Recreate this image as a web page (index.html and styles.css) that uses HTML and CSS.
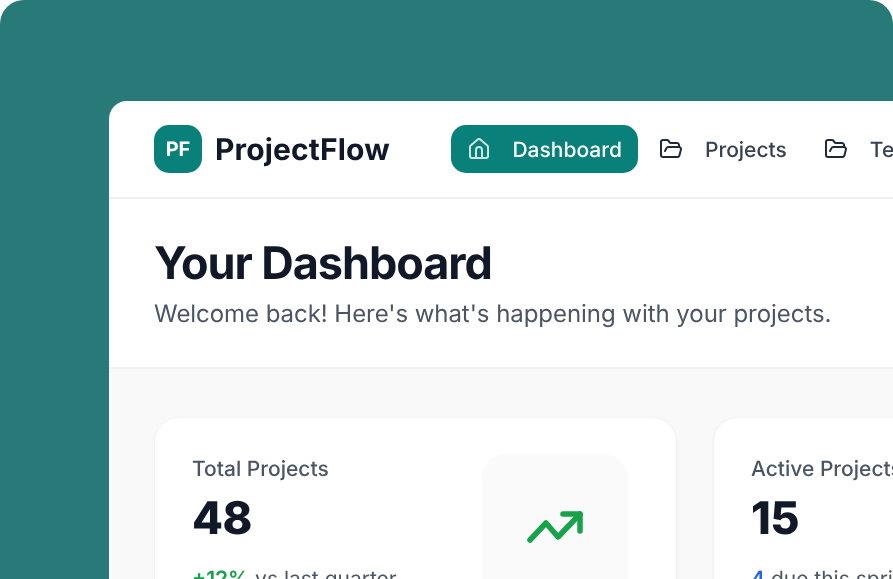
FILE: index.html
```html
<!DOCTYPE html>
<html lang="en">
<head>
<meta charset="utf-8">
<title>ProjectFlow</title>
<link rel="stylesheet" href="styles.css">
</head>
<body>
<div class="frame">
  <div class="app">
    <header class="topbar">
      <div class="brand">
        <div class="logo">PF</div>
        <div class="brand-name">ProjectFlow</div>
      </div>
      <nav class="nav">
        <a class="nav-item active">
          <svg class="nav-icon" viewBox="0 0 24 24" fill="none" stroke="currentColor" stroke-width="2" stroke-linecap="round" stroke-linejoin="round"><path d="M15 21v-8a3 3 0 0 0-6 0v8"/><path d="M3 10a2 2 0 0 1 .709-1.528l7-5.999a2 2 0 0 1 2.582 0l7 5.999A2 2 0 0 1 21 10v9a2 2 0 0 1-2 2H5a2 2 0 0 1-2-2z"/></svg>
          <span class="nav-text">Dashboard</span>
        </a>
        <a class="nav-item">
          <svg class="nav-icon" viewBox="0 0 24 24" fill="none" stroke="currentColor" stroke-width="2" stroke-linecap="round" stroke-linejoin="round"><path d="m6 14 1.5-2.9A2 2 0 0 1 9.24 10H20a2 2 0 0 1 1.94 2.5l-1.54 6a2 2 0 0 1-1.95 1.5H4a2 2 0 0 1-2-2V5a2 2 0 0 1 2-2h3.9a2 2 0 0 1 1.69.9l.81 1.2a2 2 0 0 0 1.67.9H18a2 2 0 0 1 2 2v2"/></svg>
          <span class="nav-text">Projects</span>
        </a>
        <a class="nav-item">
          <svg class="nav-icon" viewBox="0 0 24 24" fill="none" stroke="currentColor" stroke-width="2" stroke-linecap="round" stroke-linejoin="round"><path d="m6 14 1.5-2.9A2 2 0 0 1 9.24 10H20a2 2 0 0 1 1.94 2.5l-1.54 6a2 2 0 0 1-1.95 1.5H4a2 2 0 0 1-2-2V5a2 2 0 0 1 2-2h3.9a2 2 0 0 1 1.69.9l.81 1.2a2 2 0 0 0 1.67.9H18a2 2 0 0 1 2 2v2"/></svg>
          <span class="nav-text">Team</span>
        </a>
      </nav>
    </header>
    <section class="intro">
      <h1 class="title">Your Dashboard</h1>
      <p class="subtitle">Welcome back! Here's what's happening with your projects.</p>
    </section>
    <main class="content">
      <div class="cards">
        <article class="card">
          <div class="card-body">
            <div class="card-label">Total Projects</div>
            <div class="card-value">48</div>
            <div class="card-note"><b class="up">+12%</b> vs last quarter</div>
          </div>
          <div class="card-icon">
            <svg class="trend" viewBox="0 0 56 34" fill="none" stroke="#16a34a" stroke-width="5.5" stroke-linecap="round" stroke-linejoin="round"><path d="M3 30 19 13l12 14 22-23"/><path d="M36 4h17v17"/></svg>
          </div>
        </article>
        <article class="card">
          <div class="card-body">
            <div class="card-label">Active Projects</div>
            <div class="card-value">15</div>
            <div class="card-note"><b class="due">4</b> due this sprint</div>
          </div>
        </article>
      </div>
    </main>
  </div>
</div>
</body>
</html>
```

FILE: styles.css
```css
* { box-sizing: border-box; }
html, body { margin: 0; height: 100%; background: #fff; overflow: hidden; }
body { font-family: Inter, "Liberation Sans", sans-serif; text-rendering: geometricPrecision; }
.frame {
  width: 893px;
  height: 579px;
  background: #277a78;
  border-radius: 24px 24px 0 0;
  padding: 101px 0 0 109px;
  overflow: hidden;
}
.app {
  width: 1100px;
  height: 478px;
  background: #fff;
  border-radius: 18px 0 0 0;
  overflow: hidden;
  filter: blur(.3px);
}
.topbar {
  height: 98px;
  display: flex;
  align-items: center;
  gap: 61.5px;
  padding: 0 45px;
  border-bottom: 2px solid #eeeff1;
}
.brand { display: flex; align-items: center; gap: 13px; }
.logo {
  width: 48px;
  height: 48px;
  border-radius: 15px;
  background: #0a807a;
  color: #fff;
  font-size: 20px;
  font-weight: 700;
  display: flex;
  align-items: center;
  justify-content: center;
}
.brand-name { font-size: 30px; font-weight: 700; color: #111827; letter-spacing: .15px; padding-top: 1px; }
.nav { display: flex; align-items: center; }
.nav-item {
  height: 48px;
  display: flex;
  align-items: center;
  gap: 22px;
  padding: 0 16px;
  border-radius: 15px;
  font-size: 21px;
  font-weight: 500;
  color: #374151;
  margin-right: 5px;
}
.nav-text { padding-top: 2px; }
.nav-item.active { background: #0a807a; color: #fff; gap: 21px; }
.nav-icon { width: 24px; height: 24px; flex: none; color: #1f2937; }
.nav-item.active .nav-icon { color: #fff; opacity: .8; }
.intro { height: 170px; padding: 37px 45px 0; border-bottom: 2px solid #f0f1f3; }
.title {
  margin: 0;
  font-size: 45px;
  line-height: 54px;
  font-weight: 750;
  color: #111827;
  letter-spacing: -1.05px;
}
.subtitle { margin: 8px 0 0; font-size: 24px; line-height: 32px; color: #4b5563; letter-spacing: -.05px; }
.content { background: #f9f9fa; height: 210px; padding: 49px 45px 0 46px; }
.cards { display: flex; gap: 38px; }
.card {
  width: 521px;
  flex: none;
  height: 240px;
  background: #fff;
  border-radius: 24px;
  box-shadow: 0 1px 4px rgba(17, 24, 39, .07);
  padding: 36px 48px 0 37px;
  display: flex;
  justify-content: space-between;
}
.card-label { font-size: 21px; line-height: 30px; color: #4b5563; font-weight: 500; margin-top: 1px; }
.card-value { font-size: 45px; line-height: 58px; font-weight: 800; color: #111827; margin-top: 4px; letter-spacing: -.5px; }
.card-note { font-size: 21px; line-height: 30px; color: #4b5563; margin-top: 18px; }
.up { color: #16a34a; font-weight: 600; }
.due { color: #2563eb; font-weight: 600; }
.card-icon {
  width: 146px;
  height: 146px;
  border-radius: 24px;
  background: #fafafb;
  display: flex;
  align-items: center;
  justify-content: center;
}
.trend { width: 56px; height: 34px; }
```
